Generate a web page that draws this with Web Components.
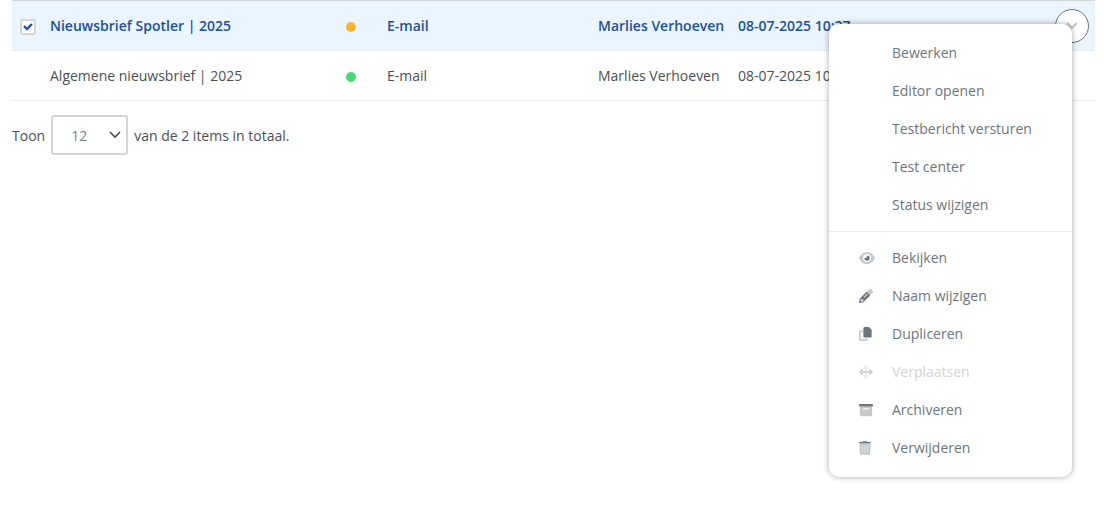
<!DOCTYPE html>
<html lang="nl">
<head>
<meta charset="utf-8">
<title>Nieuwsbrieven</title>
<style>
    body {
        box-sizing: border-box;
        min-height: 100vh;
        margin: 0;
        padding: 0 9px 0 12px;
        background: #fff;
        color: #4a4f55;
        font: 14px/20px "Open Sans", "Noto Sans", sans-serif;
    }
</style>
</head>
<body>
<mailing-list></mailing-list>
<list-pager total="2"></list-pager>

<script>
const icons = {
    eye: `<svg viewBox="0 0 576 512" width="16" height="14">
        <path opacity=".4" fill-rule="evenodd" d="M288 32c-81 0-146 37-193 80C49 156 18 208 3 244c-3 8-3 17 0 25 15 35 46 87 92 131 47 43 112 80 193 80s146-37 193-80c46-44 77-96 92-131 3-8 3-17 0-25-15-36-46-88-92-132-47-43-112-80-193-80zM144 256a144 144 0 1 0 288 0 144 144 0 1 0-288 0z"/>
        <path d="M288 160c-3 0-5 0-8 0 5 10 8 20 8 32 0 35-29 64-64 64-12 0-22-3-32-8 0 3 0 5 0 8a96 96 0 1 0 96-96z"/></svg>`,
    pencil: `<svg viewBox="0 0 512 512" width="14" height="14">
        <path opacity=".4" d="M362 20a64 64 0 0 1 90 0l40 40a64 64 0 0 1 0 90l-58 58L304 78z"/>
        <path fill-rule="evenodd" d="M288 94 52 330c-10 10-18 24-22 38L1 481c-2 8 0 17 6 23s15 9 24 7l113-30c14-4 28-12 38-22l236-235zM92 376h40v44h44l-8 18-76 22-40-40zm221-175-112 112c-6 6-16 6-22 0s-6-16 0-22l112-112c6-6 16-6 22 0s6 16 0 22z"/></svg>`,
    copy: `<svg viewBox="0 0 512 512" width="14" height="14">
        <path opacity=".4" d="M64 128h96v64H64v256h192v-32h64v32c0 35-29 64-64 64H64c-35 0-64-29-64-64V192c0-35 29-64 64-64z"/>
        <path d="M208 0h140c12 0 24 5 33 14l68 68c9 9 14 21 14 33v221c0 27-22 48-48 48H208c-27 0-48-21-48-48V48c0-26 21-48 48-48z"/></svg>`,
    move: `<svg viewBox="0 0 512 512" width="14" height="14">
        <path opacity=".4" d="M278 10l80 80c9 9 11 21 7 33-5 11-17 21-29 21h-48v68h-64v-68h-48c-12 0-24-10-29-21-4-12-2-24 7-33l80-80c12-13 31-13 44 0zM224 300h64v68h48c12 0 24 10 29 21 4 12 2 24-7 33l-80 80c-13 13-32 13-44 0l-80-80c-9-9-11-21-7-33 5-11 17-21 29-21h48z"/>
        <path d="M10 234l80-80c9-9 21-11 33-7 11 5 21 17 21 29v40h224v-40c0-12 10-24 21-29 12-4 24-2 33 7l80 80c13 13 13 32 0 44l-80 80c-9 9-21 11-33 7-11-5-21-17-21-29v-40H144v40c0 12-10 24-21 29-12 4-24 2-33-7l-80-80c-13-12-13-31 0-44z"/></svg>`,
    archive: `<svg viewBox="0 0 512 512" width="14" height="14">
        <path opacity=".4" fill-rule="evenodd" d="M32 128h448v304c0 27-21 48-48 48H80c-27 0-48-21-48-48zm128 64c-9 0-16 7-16 16v16c0 9 7 16 16 16h192c9 0 16-7 16-16v-16c0-9-7-16-16-16z"/>
        <path d="M32 32h448c18 0 32 14 32 32v32c0 18-14 32-32 32H32c-18 0-32-14-32-32V64c0-18 14-32 32-32z"/></svg>`,
    trash: `<svg viewBox="0 0 448 512" width="12" height="14">
        <path opacity=".4" fill-rule="evenodd" d="M24 80h400v376c0 31-25 56-56 56H80c-31 0-56-25-56-56zM118 160v264a10 10 0 0 0 20 0V160a10 10 0 0 0-20 0zm96 0v264a10 10 0 0 0 20 0V160a10 10 0 0 0-20 0zm96 0v264a10 10 0 0 0 20 0V160a10 10 0 0 0-20 0z"/>
        <path d="M135 18C141 7 152 0 164 0h120c12 0 23 7 29 18l7 14h104c13 0 24 11 24 24s-11 24-24 24H24C11 80 0 69 0 56s11-24 24-24h104z"/></svg>`
}

class StatusDot extends HTMLElement {
    connectedCallback(){
        this.attachShadow({ mode: "open" }).innerHTML = `
            <style>
                :host {
                    display: block;
                    width: 10px;
                    height: 10px;
                    margin-top: 2px;
                    border-radius: 50%;
                    background: #f4b731;
                }
                :host([state="actief"]) {
                    background: #43dc70;
                }
            </style>
        `
    }
}

class MenuItem extends HTMLElement {
    connectedCallback(){
        const icon = icons[this.getAttribute("icon")] || ""
        const disabled = this.hasAttribute("disabled") ? "disabled" : ""
        this.attachShadow({ mode: "open" }).innerHTML = `
            <style>
                :host {
                    display: block;
                }
                button {
                    display: flex;
                    align-items: center;
                    width: 100%;
                    height: 38px;
                    padding: 0 40px 0 30px;
                    border: 0;
                    background: none;
                    color: #6c757d;
                    font: inherit;
                    white-space: nowrap;
                    cursor: pointer;
                }
                button:disabled {
                    color: #d0d3d6;
                    cursor: default;
                }
                .icon {
                    display: flex;
                    flex: none;
                    width: 33px;
                }
                svg {
                    fill: currentColor;
                }
            </style>
            <button type="button" role="menuitem" ${disabled}>
                <span class="icon" aria-hidden="true">${icon}</span>
                <slot></slot>
            </button>
        `
    }
}

class ActionMenu extends HTMLElement {
    connectedCallback(){
        this.attachShadow({ mode: "open" }).innerHTML = `
            <style>
                :host {
                    display: block;
                    box-sizing: border-box;
                    padding: 10px 0;
                    border-radius: 10px;
                    background: #fff;
                    box-shadow: 0 0 6px rgba(0, 0, 0, .35);
                    font-weight: 400;
                }
                hr {
                    margin: 7px 0;
                    border: 0;
                    border-top: 1px solid #e9ebed;
                }
            </style>
            <div role="menu">
                <slot></slot>
                <hr>
                <slot name="manage"></slot>
            </div>
        `
    }
}

class RowActions extends HTMLElement {
    connectedCallback(){
        this.attachShadow({ mode: "open" }).innerHTML = `
            <style>
                :host {
                    display: block;
                    position: relative;
                    width: 34px;
                    margin-left: auto;
                }
                button {
                    display: flex;
                    align-items: center;
                    justify-content: center;
                    width: 34px;
                    height: 34px;
                    padding: 0;
                    border: 1px solid #6c757d;
                    border-radius: 50%;
                    background: #fff;
                }
                /* the open menu hangs over the lower left part of its button */
                ::slotted(action-menu) {
                    position: absolute;
                    top: 15px;
                    right: 17px;
                    width: 243px;
                }
            </style>
            <button type="button" aria-label="Acties" aria-expanded="true">
                <svg width="12" height="8" viewBox="0 0 12 8" fill="none" stroke="#c0c3c6" stroke-width="2"><path d="M1 1l5 5 5-5"/></svg>
            </button>
            <slot></slot>
        `
    }
}

class MailingList extends HTMLElement {
    getStyles(){
        return `
            <style>
                :host {
                    display: block;
                }
                table {
                    width: 100%;
                    table-layout: fixed;
                    border-spacing: 0;
                    border-top: 1px solid #d2d4d6;
                }
                td {
                    height: 49px;
                    padding: 0;
                    border-bottom: 1px solid #e9ebed;
                    white-space: nowrap;
                }
                td:last-child {
                    padding-right: 6px;
                }
                .check { width: 38px; }
                .name { width: 296px; }
                .state { width: 41px; }
                .type { width: 211px; }
                .author { width: 140px; }
                .date { width: 140px; }
                .selected {
                    background: #eaf5ff;
                    color: #20509a;
                    font-weight: 600;
                }
                input {
                    display: block;
                    appearance: none;
                    box-sizing: border-box;
                    width: 16px;
                    height: 16px;
                    margin: 3px 0 0 8px;
                    border: 2px solid #d5d5d5;
                    border-radius: 3px;
                    background: #fff;
                }
                label {
                    display: grid;
                }
                label > * {
                    grid-area: 1 / 1;
                }
                label svg {
                    margin: 7px 0 0 11px;
                    z-index: 1;
                    pointer-events: none;
                }
                input:not(:checked) + svg {
                    visibility: hidden;
                }
            </style>
        `
    }

    connectedCallback(){
        this.attachShadow({ mode: "open" }).innerHTML = `
        ${this.getStyles()}
        <table>
            <colgroup>
                <col class="check"><col class="name"><col class="state"><col class="type"><col class="author"><col class="date"><col>
            </colgroup>
            <tbody>
                <tr class="selected">
                    <td>
                        <label>
                            <input type="checkbox" checked aria-label="Nieuwsbrief Spotler | 2025 selecteren">
                            <svg width="10" height="8" viewBox="0 0 10 8" fill="none" stroke="#20509a" stroke-width="2.4"><path d="M1 3l3 3 5-5"/></svg>
                        </label>
                    </td>
                    <td>Nieuwsbrief Spotler | 2025</td>
                    <td><status-dot state="concept"></status-dot></td>
                    <td>E-mail</td>
                    <td>Marlies Verhoeven</td>
                    <td>08-07-2025 10:27</td>
                    <td>
                        <row-actions>
                            <action-menu>
                                <menu-item>Bewerken</menu-item>
                                <menu-item>Editor openen</menu-item>
                                <menu-item>Testbericht versturen</menu-item>
                                <menu-item>Test center</menu-item>
                                <menu-item>Status wijzigen</menu-item>
                                <menu-item slot="manage" icon="eye">Bekijken</menu-item>
                                <menu-item slot="manage" icon="pencil">Naam wijzigen</menu-item>
                                <menu-item slot="manage" icon="copy">Dupliceren</menu-item>
                                <menu-item slot="manage" icon="move" disabled>Verplaatsen</menu-item>
                                <menu-item slot="manage" icon="archive">Archiveren</menu-item>
                                <menu-item slot="manage" icon="trash">Verwijderen</menu-item>
                            </action-menu>
                        </row-actions>
                    </td>
                </tr>
                <tr>
                    <td></td>
                    <td>Algemene nieuwsbrief | 2025</td>
                    <td><status-dot state="actief"></status-dot></td>
                    <td>E-mail</td>
                    <td>Marlies Verhoeven</td>
                    <td>08-07-2025 10:26</td>
                    <td></td>
                </tr>
            </tbody>
        </table>
        `
    }
}

class ListPager extends HTMLElement {
    connectedCallback(){
        this.attachShadow({ mode: "open" }).innerHTML = `
            <style>
                :host {
                    display: flex;
                    align-items: center;
                    gap: 6px;
                    margin-top: 14px;
                }
                .text {
                    padding-top: 2px;
                }
                .select {
                    display: grid;
                    align-items: center;
                }
                .select > * {
                    grid-area: 1 / 1;
                }
                select {
                    appearance: none;
                    box-sizing: border-box;
                    width: 77px;
                    height: 40px;
                    padding: 2px 30px 0 18px;
                    border: 2px solid #d2d4d6;
                    border-radius: 3px;
                    background: #fff;
                    color: #7b8288;
                    font: inherit;
                }
                svg {
                    justify-self: end;
                    margin-right: 7px;
                    z-index: 1;
                    pointer-events: none;
                }
            </style>
            <label class="text" for="size">Toon</label>
            <span class="select">
                <select id="size">
                    <option>12</option>
                    <option>24</option>
                    <option>48</option>
                </select>
                <svg width="12" height="8" viewBox="0 0 12 8" fill="none" stroke="#4a4f55" stroke-width="1.6"><path d="M1 1l5 5 5-5"/></svg>
            </span>
            <span class="text">van de ${this.getAttribute("total")} items in totaal.</span>
        `
    }
}

customElements.define('status-dot', StatusDot)
customElements.define('menu-item', MenuItem)
customElements.define('action-menu', ActionMenu)
customElements.define('row-actions', RowActions)
customElements.define('mailing-list', MailingList)
customElements.define('list-pager', ListPager)
</script>
</body>
</html>
